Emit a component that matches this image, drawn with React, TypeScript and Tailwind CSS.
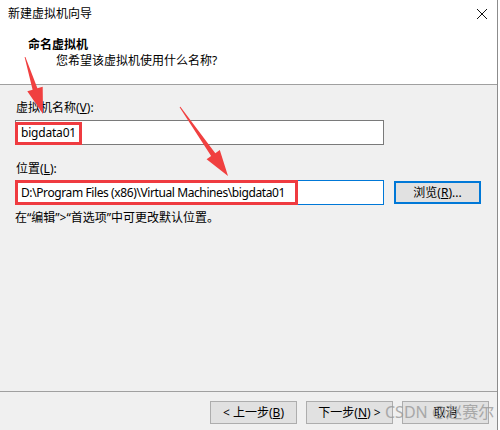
import React from 'react';

const font = { fontFamily: '"Noto Sans", "Noto Sans CJK SC", sans-serif' };

function Btn({ children }: { children: React.ReactNode }) {
  return (
    <div className="w-[87px] h-[23px] border border-[#adadad] bg-[#e1e1e1] flex items-center justify-center text-[12px] text-black">
      {children}
    </div>
  );
}

export default function App() {
  return (
    <div className="relative w-[500px] h-[430px] bg-white flex overflow-hidden text-[12px] text-black" style={font}>
      <div className="w-[498px] h-full border-r border-[#8c8c8c] flex flex-col">
        {/* title + header */}
        <div className="h-[85px] bg-white border-b border-[#a0a0a0] flex flex-col">
          <div className="h-[28px] flex items-center justify-between pl-[8px] pr-[9px]">
            <span className="leading-[16px]">新建虚拟机向导</span>
            <svg width="12" height="12" viewBox="0 0 12 12">
              <path d="M1 1 L11 11 M11 1 L1 11" stroke="#111" strokeWidth="1" />
            </svg>
          </div>
          <div className="flex mt-[9px]">
            <div className="w-[28px] shrink-0" />
            <div className="font-bold leading-[16px]">命名虚拟机</div>
          </div>
          <div className="flex">
            <div className="w-[56px] shrink-0" />
            <div className="leading-[16px]">您希望该虚拟机使用什么名称?</div>
          </div>
        </div>

        {/* body */}
        <div className="flex-1 bg-[#f0f0f0] flex flex-col pl-[15px]">
          <div className="pt-[15px] pl-[1px] leading-[16px]">
            虚拟机名称(<span className="underline">V</span>):
          </div>
          <div className="relative mt-[4px] w-[369px] h-[25px] border border-[#7a7a7a] bg-white flex items-center pl-[5px] tracking-[-0.2px]">
            bigdata01
            <div className="absolute left-[-1px] top-[1px] w-[67px] h-[23px] border-[3px] border-[#ef3b40]" />
          </div>
          <div className="pt-[16px] pl-[1px] leading-[16px]">
            位置(<span className="underline">L</span>):
          </div>
          <div className="mt-[3px] flex items-center gap-[10px]">
            <div className="relative w-[369px] h-[25px] border border-[#0078d7] bg-white flex items-center pl-[5px] whitespace-nowrap tracking-[-0.4px]">
              D:\Program Files (x86)\Virtual Machines\bigdata01
              <div className="absolute left-[-1px] top-[-1px] w-[283px] h-[25px] border-[3px] border-[#ef3b40]" />
            </div>
            <div className="w-[87px] h-[23px] border-2 border-[#0078d7] bg-[#e1e1e1] flex items-center justify-center">
              浏览(<span className="underline">R</span>)...
            </div>
          </div>
          <div className="pt-[5px] leading-[16px]">在“编辑”&gt;“首选项”中可更改默认位置。</div>
        </div>

        {/* footer */}
        <div className="h-[39px] bg-[#f0f0f0] border-t border-[#a0a0a0] flex justify-end items-start pt-[9px] pr-[8px] gap-[9px]">
          <Btn>&lt; 上一步(<span className="underline">B</span>)</Btn>
          <Btn>下一步(<span className="underline">N</span>) &gt;</Btn>
          <Btn>取消</Btn>
        </div>
      </div>

      {/* watermark */}
      <div className="absolute left-[385px] top-[401px] text-[16px] leading-[22px] text-[#9a9a9a] opacity-80 whitespace-nowrap pointer-events-none">
        CSDN @赵赛尔
      </div>

      {/* annotation arrows */}
      <svg className="absolute left-0 top-0 pointer-events-none" width="500" height="430" viewBox="0 0 500 430">
        <polygon
          fill="#f04040"
          points="24.6,57.1 32.6,89.7 27.3,91.2 43,114 42.7,86.8 37.4,88.3 25.4,56.9"
        />
        <polygon
          fill="#f04040"
          points="179.6,107.3 211.1,156.1 206.6,159.3 228,176 219.8,150.1 215.3,153.3 180.4,106.7"
        />
      </svg>
    </div>
  );
}
